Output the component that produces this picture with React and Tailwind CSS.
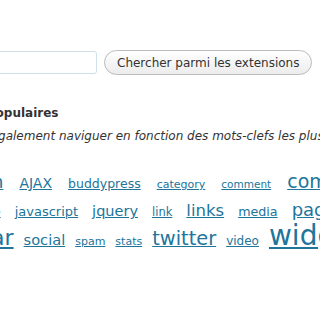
const tagRows = [
  {
    style: "-ml-[53px] gap-[16px] h-[29px]",
    tags: [
      ["admin", "text-[18px]"],
      ["AJAX", "text-[14px]"],
      ["buddypress", "text-[12.5px]"],
      ["category", "text-[11px]"],
      ["comment", "text-[10.5px]"],
      ["comments", "text-[19px]"],
    ],
  },
  {
    style: "-ml-[40px] gap-[14px] h-[21px]",
    tags: [
      ["google", "text-[12px]"],
      ["javascript", "text-[13px]"],
      ["jquery", "text-[14.5px]"],
      ["link", "text-[11.5px]"],
      ["links", "text-[16.5px]"],
      ["media", "text-[12.7px]"],
      ["pages", "text-[18px]"],
    ],
  },
  {
    style: "-ml-[68px] gap-[10px] h-[40px]",
    tags: [
      ["sidebar", "text-[22px]"],
      ["social", "text-[14.6px]"],
      ["spam", "text-[11px]"],
      ["stats", "text-[11px]"],
      ["twitter", "text-[19.4px]"],
      ["video", "text-[12px]"],
      ["widgets", "text-[28px]"],
    ],
  },
];

const App = () => {
  return (
    <div className="w-[320px] h-[320px] overflow-hidden bg-white text-[#333] font-['DejaVu_Sans',sans-serif]">
      <div className="flex items-center gap-[7px] pt-[50px] -ml-[60px]">
        <input
          type="text"
          className="w-[157px] h-[23px] border border-[#cfe0ea] rounded-[3px] bg-white"
        />
        <button className="h-[25px] px-[12px] rounded-full border border-[#bbb] bg-gradient-to-b from-white to-[#ececec] text-[12px] text-[#333] whitespace-nowrap">
          Chercher parmi les extensions
        </button>
      </div>

      <h4 className="mt-[30px] -ml-[87px] text-[12px] leading-[16px] font-bold whitespace-nowrap">
        Mots-clefs populaires
      </h4>
      <p className="mt-[7px] -ml-[89px] text-[12px] leading-[16px] italic whitespace-nowrap">
        Vous pouvez également naviguer en fonction des mots-clefs les plus populaires du répertoire des extensions :
      </p>

      <div className="mt-[28px] flex flex-col">
        {tagRows.map((row, i) => (
          <div key={i} className={`flex items-baseline whitespace-nowrap ${row.style}`}>
            {row.tags.map(([name, size]) => (
              <a key={name} href="#" className={`${size} leading-none text-[#21759b] underline`}>
                {name}
              </a>
            ))}
          </div>
        ))}
      </div>
    </div>
  );
};

export default App;
